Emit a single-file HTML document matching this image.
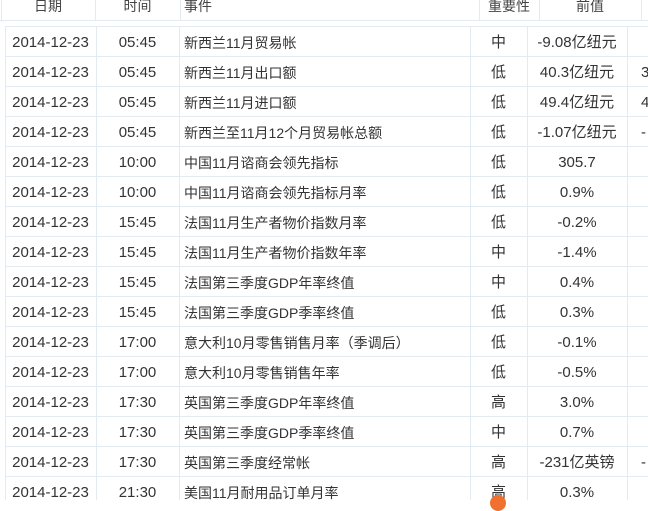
<!DOCTYPE html><html><head><meta charset="utf-8"><style>
body{margin:0;width:648px;height:500px;overflow:hidden;background:#fff;font-family:"Liberation Sans","Noto Sans CJK SC",sans-serif;font-size:15px;color:#333;position:relative}
.h{position:absolute;top:0;height:20px;line-height:12px;text-align:center;font-size:14px;color:#444}
.vl{position:absolute;background:#e3eaf2;width:1px}
.hl{position:absolute;background:#e3eaf2;height:1px;left:5px;width:643px}
.c{position:absolute;height:30px;line-height:30px;white-space:nowrap}
.e{font-size:14px}
</style></head><body>
<div class="vl" style="left:1px;top:0;height:22px"></div>
<div class="vl" style="left:95px;top:0;height:20px"></div>
<div class="vl" style="left:180px;top:0;height:20px"></div>
<div class="vl" style="left:479px;top:0;height:20px"></div>
<div class="vl" style="left:539px;top:0;height:20px"></div>
<div class="vl" style="left:641px;top:0;height:20px"></div>
<div style="position:absolute;left:0;top:20px;width:648px;height:1px;background:#e3eaf2"></div>
<div class="h" style="left:1px;width:94px">日期</div>
<div class="h" style="left:95px;width:85px">时间</div>
<div class="h" style="left:184px;text-align:left">事件</div>
<div class="h" style="left:479px;width:60px">重要性</div>
<div class="h" style="left:539px;width:102px">前值</div>
<div class="vl" style="left:5px;top:26px;height:474px"></div>
<div class="vl" style="left:96px;top:26px;height:474px"></div>
<div class="vl" style="left:179px;top:26px;height:474px"></div>
<div class="vl" style="left:470px;top:26px;height:474px"></div>
<div class="vl" style="left:527px;top:26px;height:474px"></div>
<div class="vl" style="left:627px;top:26px;height:474px"></div>
<div id="rows"></div>
<div style="position:absolute;left:490px;top:495px;width:16px;height:16px;border-radius:50%;background:#f07030"></div>
<script>
var d=[["05:45","新西兰11月贸易帐","中","-9.08亿纽元",""],["05:45","新西兰11月出口额","低","40.3亿纽元","3"],["05:45","新西兰11月进口额","低","49.4亿纽元","4"],["05:45","新西兰至11月12个月贸易帐总额","低","-1.07亿纽元","-"],["10:00","中国11月谘商会领先指标","低","305.7",""],["10:00","中国11月谘商会领先指标月率","低","0.9%",""],["15:45","法国11月生产者物价指数月率","低","-0.2%",""],["15:45","法国11月生产者物价指数年率","中","-1.4%",""],["15:45","法国第三季度GDP年率终值","中","0.4%",""],["15:45","法国第三季度GDP季率终值","低","0.3%",""],["17:00","意大利10月零售销售月率（季调后）","低","-0.1%",""],["17:00","意大利10月零售销售年率","低","-0.5%",""],["17:30","英国第三季度GDP年率终值","高","3.0%",""],["17:30","英国第三季度GDP季率终值","中","0.7%",""],["17:30","英国第三季度经常帐","高","-231亿英镑","-"],["21:30","美国11月耐用品订单月率","高","0.3%",""]];
var h="";
for(var i=0;i<d.length;i++){var y=28+30*i,r=d[i];
h+='<div class="hl" style="top:'+(26+30*i)+'px"></div>';
h+='<div class="c" style="top:'+y+'px;left:5px;width:91px;text-align:center">2014-12-23</div>';
h+='<div class="c" style="top:'+y+'px;left:96px;width:83px;text-align:center">'+r[0]+'</div>';
h+='<div class="c e" style="top:'+y+'px;left:184px">'+r[1]+'</div>';
h+='<div class="c" style="top:'+y+'px;left:470px;width:57px;text-align:center">'+r[2]+'</div>';
h+='<div class="c" style="top:'+y+'px;left:527px;width:100px;text-align:center">'+r[3]+'</div>';
h+='<div class="c" style="top:'+y+'px;left:641px">'+r[4]+'</div>';}
document.getElementById("rows").innerHTML=h;
</script>
</body></html>
